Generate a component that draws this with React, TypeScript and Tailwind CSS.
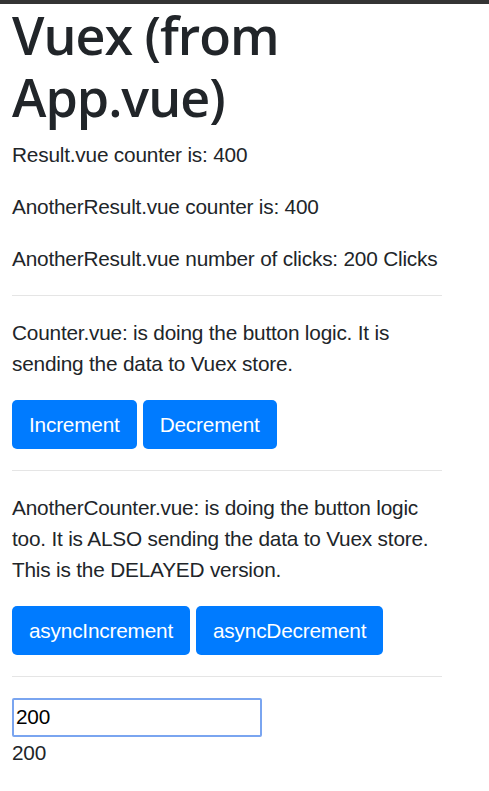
import { useState } from 'react';

const font = { fontFamily: '"Liberation Sans", Arial, sans-serif' };
const headFont = { fontFamily: '"Open Sans", "Liberation Sans", Arial, sans-serif' };

function Btn({ children }: { children: React.ReactNode }) {
  return (
    <button className="h-[49px] px-[17px] rounded-[5px] bg-[#007bff] text-white text-[20.8px] leading-[31.2px] tracking-[-0.2px]">
      {children}
    </button>
  );
}

export default function App() {
  const [value, setValue] = useState('200');

  return (
    <div className="min-h-screen bg-white text-[#212529] border-t-4 border-[#343434]" style={font}>
      <div className="w-[430px] ml-3 text-[20.8px] leading-[31.2px] tracking-[-0.2px]">
        <h1 className="text-[52px] leading-[62.4px] font-semibold tracking-[-1px] mb-[10.4px]" style={headFont}>
          Vuex (from App.vue)
        </h1>

        <p className="mb-[20.8px]">Result.vue counter is: 400</p>
        <p className="mb-[20.8px]">AnotherResult.vue counter is: 400</p>
        <p>AnotherResult.vue number of clicks: 200 Clicks</p>

        <hr className="my-[20.8px] border-t border-black/10" />

        <p className="mb-[20.8px]">Counter.vue: is doing the button logic. It is sending the data to Vuex store.</p>
        <div className="flex gap-[6px]">
          <Btn>Increment</Btn>
          <Btn>Decrement</Btn>
        </div>

        <hr className="my-[20.8px] border-t border-black/10" />

        <p className="mb-[20.8px]">
          AnotherCounter.vue: is doing the button logic too. It is ALSO sending the data to Vuex store. This is the DELAYED version.
        </p>
        <div className="flex gap-[6px]">
          <Btn>asyncIncrement</Btn>
          <Btn>asyncDecrement</Btn>
        </div>

        <hr className="my-[20.8px] border-t border-black/10" />

        <input
          value={value}
          onChange={e => setValue(e.target.value)}
          className="block w-[250px] h-[39px] px-[2px] border-2 border-[#7aa5f0] rounded-[2px] text-black outline-none"
        />
        <div>{value}</div>
      </div>
    </div>
  );
}
